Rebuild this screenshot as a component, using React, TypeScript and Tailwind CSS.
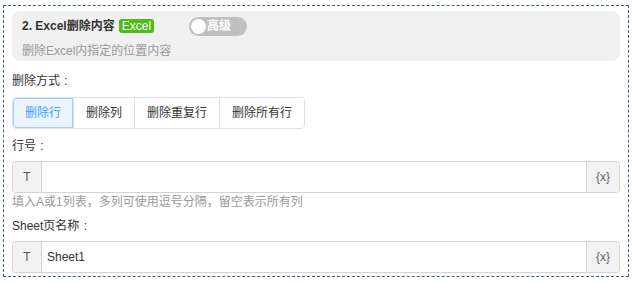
import React from 'react';

const font = { fontFamily: '"Liberation Sans", "Noto Sans CJK SC", sans-serif' };

const modes = ['删除行', '删除列', '删除重复行', '删除所有行'];

const Colon = () => <span className="inline-block w-[12px] text-center">:</span>;

const InputRow: React.FC<{ value?: string }> = ({ value }) => (
  <div className="flex h-[32px] w-full rounded-[4px] border border-[#d3d3d3] overflow-hidden">
    <div className="w-[29px] flex items-center justify-center bg-[#f2f2f2] border-r border-[#d3d3d3] text-[12px] text-[#555]">
      T
    </div>
    <div className="flex-1 flex items-center px-[5px] text-[12px] text-[#333]">{value}</div>
    <div className="w-[33px] flex items-center justify-center bg-[#f2f2f2] border-l border-[#d3d3d3] text-[12px] text-[#666]">
      {'{x}'}
    </div>
  </div>
);

export default function App() {
  const [mode, setMode] = React.useState(0);

  return (
    <div className="w-[632px] h-[282px] bg-white pt-[5px] pl-[3px]" style={font}>
      <div className="w-[626px] h-[272px] border border-dashed border-[#3b5ba5] px-[8px] pt-[5px]">
        <div className="h-[50px] w-[608px] rounded-[8px] bg-[#f0f0f0] pl-[10px] pt-[5px]">
          <div className="flex items-center h-[20px]">
            <span className="text-[12px] font-bold text-[#333]">2. Excel删除内容</span>
            <span className="ml-[4px] h-[14px] px-[3px] rounded-[3px] bg-[#52b91a] text-white text-[12px] leading-[14px]">
              Excel
            </span>
            <div className="ml-[35px] flex items-center h-[19px] w-[58px] rounded-full bg-[#bfbfbf] pl-[2px]">
              <span className="w-[15px] h-[15px] rounded-full bg-white" />
              <span className="ml-[1px] text-[12px] font-bold text-white">高级</span>
            </div>
          </div>
          <div className="mt-[6px] text-[12px] text-[#999]">删除Excel内指定的位置内容</div>
        </div>

        <div className="mt-[13px] text-[12px] text-[#333] leading-[14px]">
          删除方式<Colon />
        </div>
        <div className="mt-[9px] flex w-fit h-[32px] rounded-[4px] border border-[#dcdfe6] overflow-hidden">
          {modes.map((m, i) => (
            <button
              key={m}
              onClick={() => setMode(i)}
              className={
                'px-[12px] text-[12px] ' +
                (i > 0 ? 'border-l border-[#dcdfe6] ' : '') +
                (mode === i
                  ? 'bg-[#ecf5ff] text-[#409eff] outline outline-1 outline-[#a0cfff] -outline-offset-1 rounded-l-[4px]'
                  : 'bg-white text-[#333]')
              }
            >
              {m}
            </button>
          ))}
        </div>

        <div className="mt-[10px] text-[12px] text-[#333] leading-[14px]">
          行号<Colon />
        </div>
        <div className="mt-[8px]">
          <InputRow />
        </div>
        <div className="mt-[2px] text-[12px] text-[#999] leading-[14px]">填入A或1列表，多列可使用逗号分隔，留空表示所有列</div>

        <div className="mt-[10px] text-[12px] text-[#333] leading-[14px]">
          Sheet页名称<Colon />
        </div>
        <div className="mt-[8px]">
          <InputRow value="Sheet1" />
        </div>
      </div>
    </div>
  );
}
